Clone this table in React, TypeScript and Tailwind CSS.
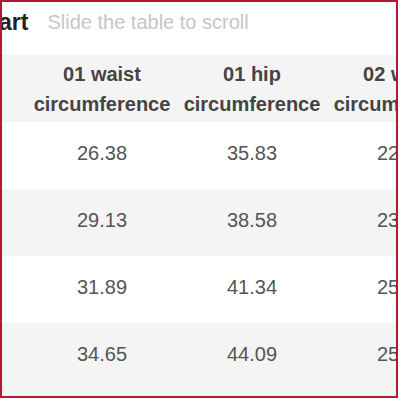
import React from 'react';

const columns = [
    { top: '01 waist', bottom: 'circumference' },
    { top: '01 hip', bottom: 'circumference' },
    { top: '02 waist', bottom: 'circumference' },
];

const rows = [
    ['26.38', '35.83', '22.44'],
    ['29.13', '38.58', '23.62'],
    ['31.89', '41.34', '25.20'],
    ['34.65', '44.09', '25.98'],
];

const App: React.FC = () => {
    return (
        <div className="w-[400px] h-[400px] bg-white" style={{ fontFamily: '"Liberation Sans", Arial, sans-serif' }}>
            <div className="w-[398px] h-[398px] border-2 border-[#b3173a] overflow-hidden bg-white">
                {/* Title */}
                <div className="h-[53px] flex items-center whitespace-nowrap">
                    <span className="ml-[-86px] text-[23px] font-bold text-[#222] leading-none mt-[-13px]">Size Chart</span>
                    <span className="ml-[19px] text-[20px] text-[#c6c6c6] leading-none mt-[-13px]">Slide the table to scroll</span>
                </div>

                {/* Table */}
                <div className="w-[600px]">
                    <div className="flex bg-[#f4f4f4] h-[67px] pl-[25px]">
                        {columns.map((c, i) => (
                            <div key={i} className="w-[150px] shrink-0 flex flex-col items-center justify-center text-[20px] font-bold text-[#444] leading-[30px]">
                                <span>{c.top}</span>
                                <span>{c.bottom}</span>
                            </div>
                        ))}
                    </div>
                    {rows.map((r, i) => (
                        <div key={i} className={`flex h-[67px] pl-[25px] ${i % 2 === 1 ? 'bg-[#f4f4f4]' : 'bg-white'}`}>
                            {r.map((v, j) => (
                                <div key={j} className="w-[150px] shrink-0 flex items-center justify-center text-[20px] text-[#555] pb-[5px]">
                                    {v}
                                </div>
                            ))}
                        </div>
                    ))}
                    <div className="h-[20px] bg-[#f4f4f4]" />
                </div>
            </div>
        </div>
    );
};

export default App;
